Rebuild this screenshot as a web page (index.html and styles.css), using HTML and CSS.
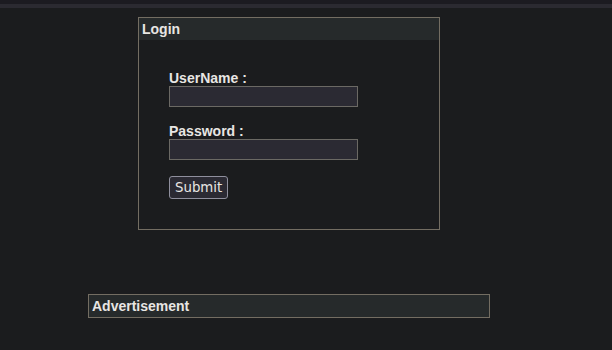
FILE: index.html
```html
<!DOCTYPE html>
<html>
<head>
<meta charset="utf-8">
<link rel="stylesheet" href="styles.css">
</head>
<body>
<div class="topbar"></div>
<div class="panel login">
  <div class="panel-head">Login</div>
  <form class="login-form">
    <label class="field">
      <span class="field-label">UserName :</span>
      <input class="field-input" type="text">
    </label>
    <label class="field">
      <span class="field-label">Password :</span>
      <input class="field-input" type="password">
    </label>
    <button class="submit" type="button">Submit</button>
  </form>
</div>
<div class="panel ad">
  <div class="panel-head">Advertisement</div>
</div>
</body>
</html>
```
FILE: styles.css
```css
html, body {
  margin: 0;
  padding: 0;
  background: #1b1c1e;
  color: #e8e6e3;
  font-family: "Liberation Sans", Arial, sans-serif;
}
.topbar {
  height: 4px;
  background: #1c1b21;
  border-bottom: 4px solid #2b2a31;
}
.panel {
  border: 1px solid #736d62;
  box-sizing: border-box;
}
.login {
  width: 302px;
  margin: 9px 0 0 138px;
  height: 213px;
}
.ad {
  width: 402px;
  margin: 64px 0 0 88px;
  height: 24px;
}
.panel-head {
  background: #262a2b;
  height: 22px;
  line-height: 22px;
  padding: 0 3px;
  font-size: 14px;
  font-weight: bold;
}
.login-form {
  display: flex;
  flex-direction: column;
  align-items: flex-start;
  padding: 29px 0 0 30px;
}
.field {
  display: flex;
  flex-direction: column;
  margin-bottom: 15px;
}
.field-label {
  font-size: 14px;
  font-weight: bold;
  line-height: 16px;
  padding-top: 1px;
}
.field-input {
  box-sizing: border-box;
  width: 189px;
  height: 21px;
  margin: 0;
  background: #2b2a33;
  border: 1px solid #6b6964;
  color: #e8e6e3;
  padding: 1px 2px;
}
.submit {
  margin-top: 1px;
  box-sizing: border-box;
  height: 23px;
  padding: 1px 5px;
  background: #2b2a33;
  color: #e8e6e3;
  border: 1px solid #8f8f9d;
  border-radius: 3px;
  font-family: "DejaVu Sans", sans-serif;
  font-size: 13.33px;
}
```
